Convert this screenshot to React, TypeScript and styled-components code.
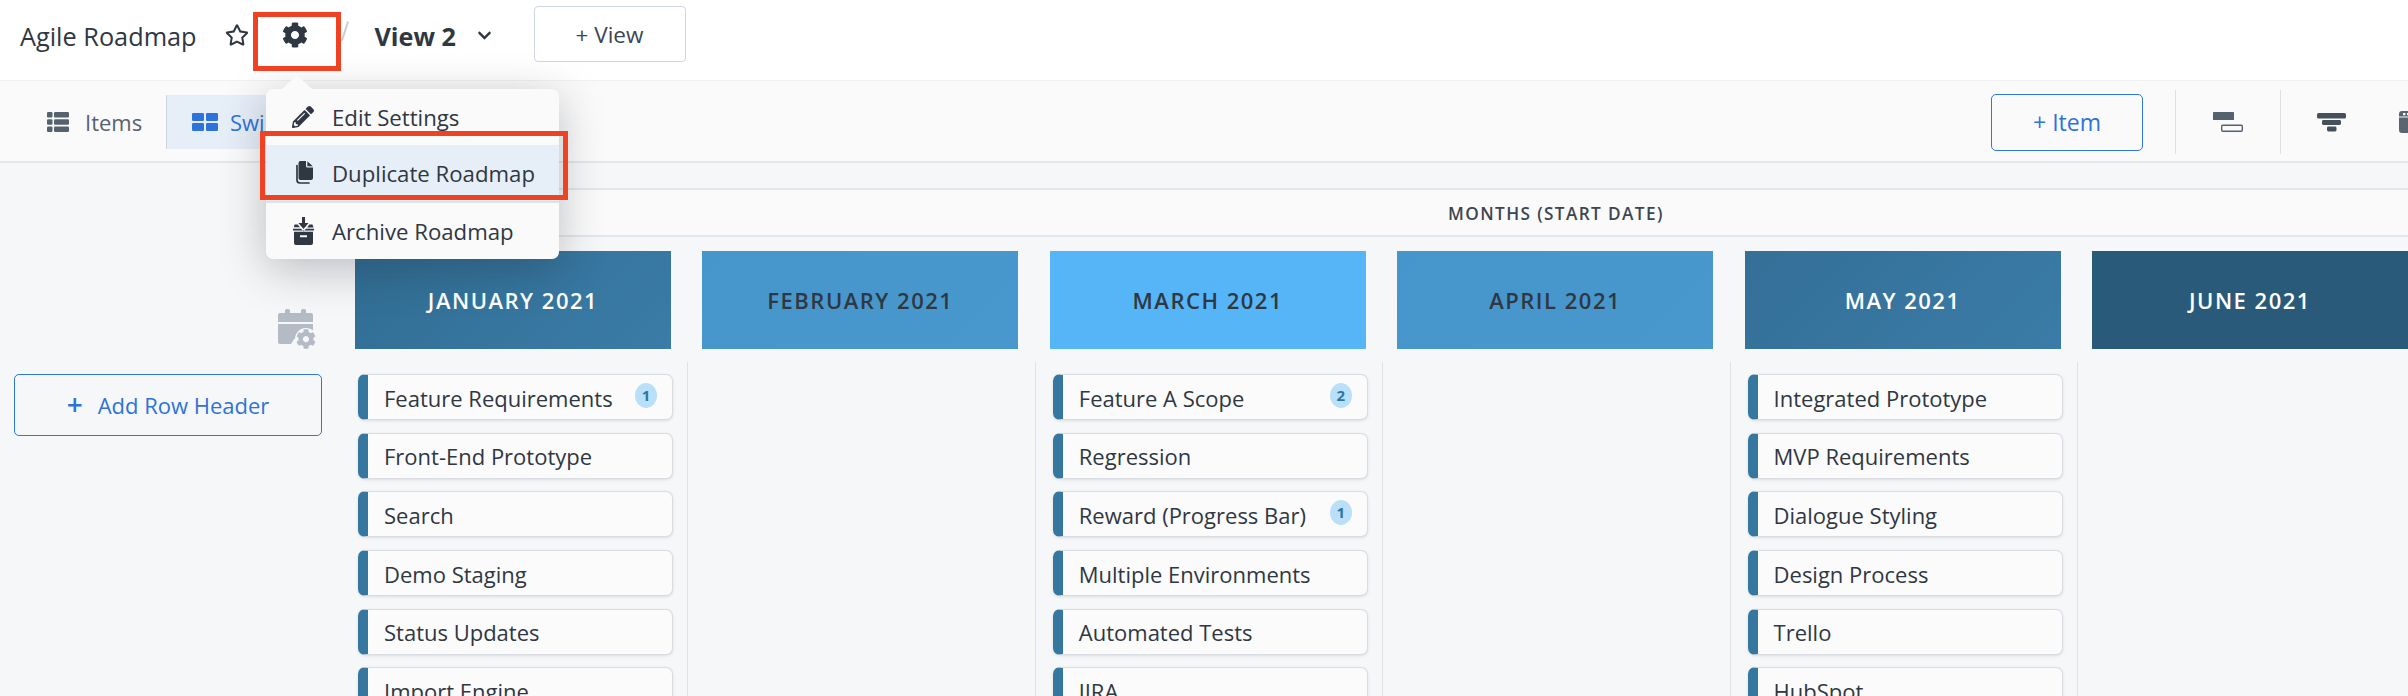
import React from "react";
import styled, { createGlobalStyle } from "styled-components";
import { FaCog, FaPencilAlt, FaRegStar, FaChevronDown } from "react-icons/fa";

const Global = createGlobalStyle`
  html, body { margin: 0; padding: 0; background: #f6f7f8; }
  body { font-family: "Open Sans", "Liberation Sans", sans-serif; color: #2f3742; }
  * { box-sizing: border-box; }
`;

const Page = styled.div`
  position: relative;
  width: 2408px;
  height: 696px;
  overflow: hidden;
  background: #f6f7f8;
`;

const TopBar = styled.header`
  display: flex;
  align-items: flex-start;
  height: 81px;
  background: #fff;
  border-bottom: 1px solid #eff0f1;
  padding-left: 20px;
`;

const Title = styled.div`
  font-size: 25.3px;
  line-height: 32px;
  margin-top: 20px;
  width: 205px;
  flex: none;
  color: #2f3742;
`;

const TitleIcon = styled.span<{ $w: number; $top: number }>`
  display: flex;
  justify-content: center;
  flex: none;
  width: ${(p) => p.$w}px;
  margin-top: ${(p) => p.$top}px;
  color: #2f3742;
`;

const Slash = styled.span`
  flex: none;
  width: 1.5px;
  height: 20px;
  margin: 21px 29px 0 3px;
  background: #c9ced4;
  transform: rotate(18deg);
`;

const ViewName = styled.div`
  font-size: 25.2px;
  font-weight: 700;
  line-height: 32px;
  margin-top: 20px;
  flex: none;
  width: 102px;
`;

const GhostButton = styled.button`
  flex: none;
  width: 152px;
  height: 56px;
  margin: 6px 0 0 41px;
  background: #fff;
  border: 1px solid #cfd6de;
  border-radius: 4px;
  font: 400 22.5px "Open Sans", sans-serif;
  color: #3c4652;
`;

const Toolbar = styled.div`
  display: flex;
  align-items: center;
  height: 82px;
  background: #fafafa;
  border-bottom: 2px solid #e3e6ea;
  padding-left: 47px;
`;

const Tab = styled.div<{ $active?: boolean }>`
  display: flex;
  align-items: center;
  gap: ${(p) => (p.$active ? 12 : 16)}px;
  flex: none;
  height: 54px;
  margin-top: 2px;
  font-size: 22px;
  color: ${(p) => (p.$active ? "#2e73db" : "#566170")};
  background: ${(p) => (p.$active ? "#e6eef8" : "transparent")};
  border-left: ${(p) => (p.$active ? "1px solid #cdd4dc" : "none")};
  padding-left: ${(p) => (p.$active ? 25 : 0)}px;
  width: ${(p) => (p.$active ? 190 : 119)}px;
`;

const ToolbarRight = styled.div`
  display: flex;
  align-items: center;
  flex: none;
  margin-left: 1635px;
  height: 64px;
  margin-top: 2px;
`;

const ItemButton = styled.button`
  width: 152px;
  height: 57px;
  background: transparent;
  border: 1.5px solid #2e77e0;
  border-radius: 5px;
  font: 400 23px "Open Sans", sans-serif;
  color: #2e73db;
  margin-right: 32px;
`;

const VLine = styled.span`
  width: 1px;
  height: 64px;
  background: #dde0e4;
  flex: none;
`;

const ToolSlot = styled.span<{ $w: number }>`
  display: flex;
  justify-content: center;
  align-items: center;
  flex: none;
  width: ${(p) => p.$w}px;
`;

const Board = styled.div`
  display: flex;
  align-items: flex-start;
`;

const LeftColumn = styled.aside`
  display: flex;
  flex-direction: column;
  flex: none;
  width: 341px;
  padding: 146px 19px 0 14px;
`;

const SettingsIconSlot = styled.div`
  align-self: flex-end;
  height: 42px;
  margin-right: 6px;
`;

const RowHeaderButton = styled.button`
  display: flex;
  align-items: center;
  justify-content: center;
  gap: 15px;
  margin-top: 23px;
  width: 308px;
  height: 62px;
  background: transparent;
  border: 1.5px solid #2e77e0;
  border-radius: 5px;
  font: 400 22px "Open Sans", sans-serif;
  color: #2e73db;
`;

const PlusMark = styled.span`
  font-size: 28px;
  line-height: 28px;
  font-weight: 600;
  margin-top: -3px;
`;

const Timeline = styled.main`
  flex: none;
  width: 2200px;
  padding-top: 25px;
`;

const MonthsBar = styled.div`
  height: 49px;
  margin-left: 14px;
  padding-left: 1093px;
  padding-top: 1px;
  background: #fafafa;
  border-top: 2px solid #e3e6ea;
  border-bottom: 2px solid #e3e6ea;
  display: flex;
  align-items: center;
  font-size: 17.2px;
  font-weight: 600;
  letter-spacing: 1.4px;
  color: #3c4652;
`;

const MonthRow = styled.div`
  display: flex;
  gap: 31.4px;
  padding-left: 14px;
  margin-top: 14px;
`;

const MonthCell = styled.div<{ $bg: string; $bg2: string; $light?: boolean }>`
  flex: none;
  width: 316px;
  height: 98px;
  display: flex;
  align-items: center;
  justify-content: center;
  background: linear-gradient(135deg, ${(p) => p.$bg}, ${(p) => p.$bg2});
  color: ${(p) => (p.$light ? "#fff" : "#2f3742")};
  font-size: 22px;
  font-weight: 600;
  letter-spacing: 1.5px;
`;

const Lanes = styled.div`
  display: flex;
  margin-top: 13px;
  height: 340px;
`;

const Lane = styled.div`
  flex: none;
  width: 347.4px;
  height: 100%;
  border-right: 1.5px solid #dfe2e6;
  padding: 12px 14px 0 17px;
  display: flex;
  flex-direction: column;
  gap: 12.7px;
`;

const Card = styled.div`
  display: flex;
  align-items: center;
  justify-content: space-between;
  flex: none;
  height: 46px;
  width: 315px;
  padding: 1px 15px 0 16px;
  background: #fbfbfb;
  border: 1.5px solid #d9dde2;
  border-left: 10px solid #35779f;
  border-radius: 7px;
  box-shadow: 0 1px 3px rgba(60, 70, 85, 0.14);
  font-size: 22px;
  color: #2f3742;
  white-space: nowrap;
`;

const Badge = styled.span`
  flex: none;
  width: 22px;
  height: 25px;
  margin-top: -5px;
  display: flex;
  align-items: center;
  justify-content: center;
  border-radius: 50%;
  background: #b9e0f8;
  color: #2f75a3;
  font-size: 15px;
  font-weight: 700;
`;

const Menu = styled.div`
  position: absolute;
  left: 266px;
  top: 89px;
  width: 293px;
  height: 170px;
  background: #fafafa;
  border-radius: 7px;
  box-shadow: 0 10px 45px rgba(30, 35, 45, 0.28);
  &::before {
    content: "";
    position: absolute;
    left: 16px;
    top: -14px;
    border-left: 15px solid transparent;
    border-right: 15px solid transparent;
    border-bottom: 14px solid #fafafa;
  }
`;

const MenuItem = styled.div<{ $hover?: boolean; $line?: boolean }>`
  display: flex;
  align-items: center;
  height: 56px;
  padding-left: 25px;
  gap: 17px;
  font-size: 22.2px;
  color: #2f3742;
  background: ${(p) => (p.$hover ? "#e6eef8" : "transparent")};
  margin-bottom: ${(p) => (p.$line ? 2 : 0)}px;
  box-shadow: ${(p) => (p.$line ? "0 2px 0 #dde2e8" : "none")};
`;

const MenuIcon = styled.span`
  display: flex;
  justify-content: center;
  width: 24px;
  flex: none;
`;

const Callout = styled.div<{ $x: number; $y: number; $w: number; $h: number }>`
  position: absolute;
  left: ${(p) => p.$x}px;
  top: ${(p) => p.$y}px;
  width: ${(p) => p.$w}px;
  height: ${(p) => p.$h}px;
  border: 5.5px solid #ee4223;
  pointer-events: none;
`;

const ListIcon = () => (
  <svg width="22" height="20" viewBox="0 0 22 20" fill="#566170">
    <rect x="0" y="0" width="5.5" height="5.5" rx="1.2" />
    <rect x="7" y="0" width="15" height="5.5" rx="1.2" />
    <rect x="0" y="7.2" width="5.5" height="5.5" rx="1.2" />
    <rect x="7" y="7.2" width="15" height="5.5" rx="1.2" />
    <rect x="0" y="14.5" width="5.5" height="5.5" rx="1.2" />
    <rect x="7" y="14.5" width="15" height="5.5" rx="1.2" />
  </svg>
);

const GridIcon = () => (
  <svg width="26" height="18" viewBox="0 0 26 18" fill="#2e73db">
    <rect x="0" y="0" width="12" height="8" rx="1.2" />
    <rect x="14" y="0" width="12" height="8" rx="1.2" />
    <rect x="0" y="10" width="12" height="8" rx="1.2" />
    <rect x="14" y="10" width="12" height="8" rx="1.2" />
  </svg>
);

const DuplicateIcon = () => (
  <svg width="19" height="24" viewBox="0 0 19 24" fill="#2f3742">
    <path d="M6.5 0H12v5a1.5 1.5 0 0 0 1.5 1.5H19V17a2 2 0 0 1-2 2H6.5a2 2 0 0 1-2-2V2a2 2 0 0 1 2-2z" />
    <path d="M13.4 0.3L18.7 5.2H13.4z" />
    <path d="M3 4.5v14.5a3 3 0 0 0 3 3h9" fill="none" stroke="#2f3742" strokeWidth="1.7" strokeLinecap="round" />
  </svg>
);

const ArchiveIcon = () => (
  <svg width="21" height="28" viewBox="0 0 21 28" fill="#2f3742">
    <path d="M9 0h3v6h3.6l-5.1 6-5.1-6H9z" />
    <path d="M1.5 7.5h3.2l2.2 2.8h-6l.6-2.8zM16.3 7.5h3.2l1 3h-6.3l2.1-3z" />
    <path d="M0 11.8h8l2.5 2.7 2.5-2.7h8v1.8H0z" />
    <path d="M1 14.8h19v11.2a2 2 0 0 1-2 2H3a2 2 0 0 1-2-2zm6 3.4v2h7v-2z" fillRule="evenodd" />
  </svg>
);

const CalendarGearIcon = () => (
  <svg width="38" height="41" viewBox="0 0 38 41">
    <g fill="#b4bbc4">
      <rect x="7" y="0" width="5" height="8" rx="1.5" />
      <rect x="23" y="0" width="5" height="8" rx="1.5" />
      <path d="M2 4h31a2 2 0 0 1 2 2v7H0V6a2 2 0 0 1 2-2z" />
      <path d="M0 15h35v15H16l-3 5H2a2 2 0 0 1-2-2z" />
    </g>
    <circle cx="28" cy="30" r="11" fill="#f6f7f8" />
    <FaCog x="18" y="20" size="20" color="#b4bbc4" />
  </svg>
);

const SwimIcon = () => (
  <svg width="30" height="20" viewBox="0 0 30 20" fill="#566170">
    <rect x="0" y="0" width="21" height="8" rx="0.6" />
    <rect x="8.7" y="13.2" width="20.6" height="6" rx="1" fill="none" stroke="#566170" strokeWidth="1.4" />
  </svg>
);

const FunnelIcon = () => (
  <svg width="30" height="19" viewBox="0 0 30 19" fill="#46505c">
    <rect x="0" y="0" width="29" height="5.6" rx="1.6" />
    <rect x="5" y="7" width="19" height="5" rx="1.4" />
    <rect x="10" y="13.5" width="9.5" height="5" rx="1.4" />
  </svg>
);

const PanelIcon = () => (
  <svg width="22" height="22" viewBox="0 0 22 22" fill="#5a6470">
    <path d="M3 0h16a3 3 0 0 1 3 3v16a3 3 0 0 1-3 3H3a3 3 0 0 1-3-3V3a3 3 0 0 1 3-3zM4 2v2.2h2.4V2zm4 0v2.2h2.4V2zM0 5.6v.9h22v-.9z" fillRule="evenodd" />
  </svg>
);

const months = [
  { name: "January 2021", bg: "#316d93", bg2: "#3a7ca7", light: true },
  { name: "February 2021", bg: "#4696cb", bg2: "#4898cd" },
  { name: "March 2021", bg: "#55b5f7", bg2: "#55b5f7" },
  { name: "April 2021", bg: "#4696cb", bg2: "#4898cd" },
  { name: "May 2021", bg: "#346f97", bg2: "#3a7ca7", light: true },
  { name: "June 2021", bg: "#295a7a", bg2: "#295a7a", light: true },
];

type Item = [string, number?];
const lanes: Item[][] = [
  [["Feature Requirements", 1], ["Front-End Prototype"], ["Search"], ["Demo Staging"], ["Status Updates"], ["Import Engine"]],
  [],
  [["Feature A Scope", 2], ["Regression"], ["Reward (Progress Bar)", 1], ["Multiple Environments"], ["Automated Tests"], ["JIRA"]],
  [],
  [["Integrated Prototype"], ["MVP Requirements"], ["Dialogue Styling"], ["Design Process"], ["Trello"], ["HubSpot"]],
  [],
];

export default function App() {
  return (
    <Page>
      <Global />
      <TopBar>
        <Title>Agile Roadmap</Title>
        <TitleIcon $w={24} $top={23}><FaRegStar size={24} /></TitleIcon>
        <TitleIcon $w={92} $top={22}><FaCog size={26} /></TitleIcon>
        <Slash />
        <ViewName>View 2</ViewName>
        <TitleIcon $w={16} $top={28}><FaChevronDown size={15} /></TitleIcon>
        <GhostButton>+ View</GhostButton>
      </TopBar>
      <Toolbar>
        <Tab><ListIcon />Items</Tab>
        <Tab $active><GridIcon />Swimlane</Tab>
        <ToolbarRight>
          <ItemButton>+ Item</ItemButton>
          <VLine />
          <ToolSlot $w={104}><SwimIcon /></ToolSlot>
          <VLine />
          <ToolSlot $w={102}><FunnelIcon /></ToolSlot>
          <ToolSlot $w={54}><PanelIcon /></ToolSlot>
        </ToolbarRight>
      </Toolbar>
      <Board>
        <LeftColumn>
          <SettingsIconSlot><CalendarGearIcon /></SettingsIconSlot>
          <RowHeaderButton><PlusMark>+</PlusMark>Add Row Header</RowHeaderButton>
        </LeftColumn>
        <Timeline>
          <MonthsBar>MONTHS (START DATE)</MonthsBar>
          <MonthRow>
            {months.map((m) => (
              <MonthCell key={m.name} $bg={m.bg} $bg2={m.bg2} $light={m.light}>{m.name.toUpperCase()}</MonthCell>
            ))}
          </MonthRow>
          <Lanes>
            {lanes.map((items, i) => (
              <Lane key={i}>
                {items.map(([label, count]) => (
                  <Card key={label}>
                    {label}
                    {count ? <Badge>{count}</Badge> : null}
                  </Card>
                ))}
              </Lane>
            ))}
          </Lanes>
        </Timeline>
      </Board>
      <Menu>
        <MenuItem><MenuIcon><FaPencilAlt size={22} /></MenuIcon>Edit Settings</MenuItem>
        <MenuItem $hover $line><MenuIcon><DuplicateIcon /></MenuIcon>Duplicate Roadmap</MenuItem>
        <MenuItem><MenuIcon><ArchiveIcon /></MenuIcon>Archive Roadmap</MenuItem>
      </Menu>
      <Callout $x={253} $y={12} $w={88} $h={59} />
      <Callout $x={260} $y={131} $w={308} $h={69} />
    </Page>
  );
}
